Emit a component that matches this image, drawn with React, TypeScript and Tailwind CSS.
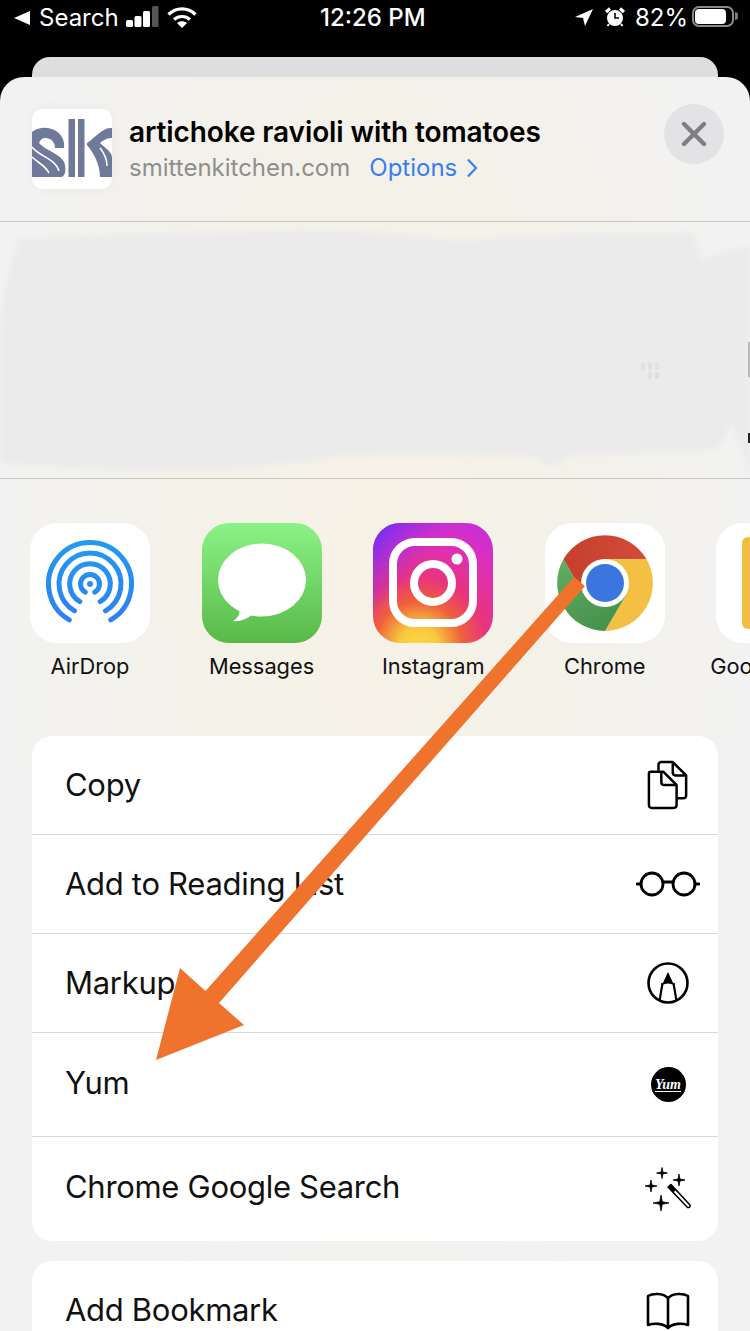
import type { ReactNode } from 'react';

const font = "font-['Inter','Noto_Sans',sans-serif]";

function StatusBar() {
  return (
    <div className="h-[57px] flex items-start pt-[5px] text-white text-[24px] leading-[26px] relative">
      <svg width="16" height="14" viewBox="0 0 16 14" className="ml-[14px] mt-[6px]" fill="#fff">
        <path d="M16 0V14L0 7Z" />
      </svg>
      <span className="ml-[9px] w-[87px]">Search</span>
      <svg width="33" height="21" viewBox="0 0 33 21" className="mt-[1px]" fill="#fff">
        <rect x="0" y="14" width="7" height="7" rx="1.5" />
        <rect x="8.5" y="10" width="7" height="11" rx="1.5" />
        <rect x="17" y="5" width="7" height="16" rx="1.5" />
        <rect x="26" y="0" width="6.5" height="21" rx="1.5" fill="#555" />
      </svg>
      <svg width="30" height="21" viewBox="0 0 30 21" className="ml-[8px] mt-[2px]" fill="none" stroke="#fff" strokeWidth="3.2">
        <path d="M1.5 7.5C9 0 21 0 28.5 7.5" />
        <path d="M7 12.5C11.5 8.5 18.5 8.5 23 12.5" />
        <path d="M15 21L10 16C13 13.8 17 13.8 20 16Z" fill="#fff" stroke="none" />
      </svg>
      <span className="ml-[123px] w-[255px] font-medium">12:26 PM</span>
      <svg width="18" height="17" viewBox="0 0 18 17" className="mt-[4px]" fill="#fff">
        <path d="M18 0L10 17L8 9L0 8Z" />
      </svg>
      <svg width="20" height="20" viewBox="0 0 20 20" className="ml-[12px] mt-[2px]">
        <circle cx="10" cy="11" r="8" fill="#fff" />
        <path d="M10 6V11H14" fill="none" stroke="#000" strokeWidth="1.6" />
        <path d="M1 5L5 1.5M19 5L15 1.5" stroke="#fff" strokeWidth="3" />
        <path d="M4 17L2.5 19M16 17L17.5 19" stroke="#fff" strokeWidth="2" />
      </svg>
      <span className="ml-[10px] w-[57px]">82%</span>
      <div className="w-[42px] h-[21px] mt-[1px] border-2 border-[#8a8a8a] rounded-[7px] p-[1px] flex">
        <div className="w-[31px] bg-white rounded-[4px]" />
      </div>
      <div className="w-[3px] h-[8px] mt-[7px] ml-[1px] bg-[#777] rounded-r-sm" />
    </div>
  );
}

function Logo() {
  return (
    <div className="w-[80px] h-[80px] bg-white rounded-[10px] overflow-hidden shrink-0 shadow-[0_0_14px_rgba(0,0,0,0.04)]">
      <svg width="80" height="80" viewBox="0 0 80 80">
        <g fill="#6f7a9a">
          <rect x="36.5" y="10" width="6.5" height="58" />
          <rect x="46" y="10" width="6.5" height="58" />
          <path d="M0 23C8 17 18 18 24 22C30 26 33 32 32 39H23C23 33 19 29 13 29C10 29 8 31 7 34C14 42 32 46 33 56C34 62 33 66 30 68H0Z" />
          <path d="M55 34C60 31 66 24 72 21C75 19 78 19 80 19V29C75 29 71 31 68 34C75 40 80 44 80 48V68H68C68 56 62 44 55 36Z" />
        </g>
        <g fill="none" stroke="#fff" strokeWidth="1.6">
          <path d="M0 38C8 48 24 50 27 62" />
          <path d="M0 48C6 54 13 56 17 64" />
          <path d="M68 39C72 44 75 50 75 57" />
        </g>
      </svg>
    </div>
  );
}

function Header() {
  return (
    <div className="h-[145px] pl-[32px] pr-[26px] pt-[32px] flex items-start border-b border-[#c6c6c2]">
      <Logo />
      <div className="ml-[17px] flex-1">
        <div className="text-[28px] leading-[32px] font-semibold text-black mt-[7px] tracking-[-0.1px]">artichoke ravioli with tomatoes</div>
        <div className="flex items-center text-[24px] leading-[30px] mt-[5px]">
          <span className="text-[#8e8e8e]">smittenkitchen.com</span>
          <span className="ml-[19px] text-[#3a7df2]">Options</span>
          <svg width="12" height="20" viewBox="0 0 12 20" className="ml-[9px]" fill="none" stroke="#3a7df2" strokeWidth="2.2">
            <path d="M2 1.5L10 10L2 18.5" />
          </svg>
        </div>
      </div>
      <div className="w-[60px] h-[60px] mt-[-5px] rounded-full bg-[#e3e3e5] flex items-center justify-center">
        <svg width="26" height="26" viewBox="0 0 26 26" stroke="#7f7f82" strokeWidth="4.4" strokeLinecap="round">
          <path d="M3 3L23 23M23 3L3 23" />
        </svg>
      </div>
    </div>
  );
}

// the blurred-out contact row
function PeopleRow() {
  return (
    <div className="h-[257px] relative border-b border-[#c6c6c2] overflow-hidden">
      <svg width="750" height="256" viewBox="0 0 750 256" className="block">
        <path
          d="M19 16C60 15 90 14 120 13C200 11 270 8 335 8C380 9 420 16 455 18C500 16 540 14 574 13C620 12 660 11 694 11L701 38C715 32 735 28 750 25V256L744 236L732 201L718 228C670 230 620 231 574 233L550 245L536 235C470 233 400 232 335 235C290 242 240 248 191 248C130 248 60 246 0 241V108L5 65Z"
          fill="#ebebeb"
          className="blur-[2px]"
        />
        <g fill="#d5e0e2" opacity="0.7">
          <rect x="641" y="141" width="4" height="7" />
          <rect x="648" y="141" width="4" height="7" />
          <rect x="655" y="141" width="4" height="7" />
          <rect x="648" y="150" width="4" height="7" />
          <rect x="655" y="150" width="4" height="7" fill="#e4d3d6" />
        </g>
        <rect x="748" y="120" width="2" height="35" fill="#b9b9b9" />
        <rect x="748" y="211" width="2" height="10" fill="#222" />
      </svg>
    </div>
  );
}

function AirDropIcon() {
  const rings = [
    'M39.25 96.9A41.5 41.5 0 1 1 80.75 96.9',
    'M44.5 87.8A31 31 0 1 1 75.5 87.8',
    'M49.85 78.6A20.3 20.3 0 1 1 70.15 78.6',
    'M55.25 69.2A9.5 9.5 0 1 1 64.75 69.2',
  ];
  return (
    <svg width="120" height="120" viewBox="0 0 120 120">
      <defs>
        <linearGradient id="airdrop" gradientUnits="userSpaceOnUse" x1="0" y1="17" x2="0" y2="97">
          <stop offset="0" stopColor="#1f9cf0" />
          <stop offset="1" stopColor="#2f80f0" />
        </linearGradient>
      </defs>
      <rect width="120" height="120" rx="27" fill="#fff" />
      <g fill="none" stroke="url(#airdrop)" strokeWidth="5" strokeLinecap="round">
        {rings.map(d => (
          <path key={d} d={d} />
        ))}
      </g>
      <circle cx="60" cy="61" r="3" fill="#2a90f2" />
    </svg>
  );
}

function MessagesIcon() {
  return (
    <svg width="120" height="120" viewBox="0 0 120 120">
      <defs>
        <linearGradient id="msg" x1="0" y1="0" x2="0" y2="1">
          <stop offset="0" stopColor="#8cf287" />
          <stop offset="1" stopColor="#58b947" />
        </linearGradient>
      </defs>
      <rect width="120" height="120" rx="27" fill="url(#msg)" />
      <ellipse cx="60" cy="57" rx="44" ry="36.5" fill="#fff" />
      <path d="M36 84C39 90 37 94 31 98C38 99 44 96 50 92Z" fill="#fff" />
    </svg>
  );
}

function InstagramIcon() {
  return (
    <svg width="120" height="120" viewBox="0 0 120 120">
      <defs>
        <radialGradient id="ig1" cx="0.38" cy="1.02" r="1.15">
          <stop offset="0" stopColor="#fbd944" />
          <stop offset="0.14" stopColor="#f8c83f" />
          <stop offset="0.32" stopColor="#ef5f3c" />
          <stop offset="0.5" stopColor="#e8337f" />
          <stop offset="0.78" stopColor="#dc2fc0" />
          <stop offset="1" stopColor="#c42fd8" />
        </radialGradient>
        <linearGradient id="ig2" x1="0" y1="0" x2="0.4" y2="0.35">
          <stop offset="0" stopColor="#5a2dfb" />
          <stop offset="1" stopColor="#a32ee8" stopOpacity="0" />
        </linearGradient>
      </defs>
      <rect width="120" height="120" rx="27" fill="url(#ig1)" />
      <rect width="120" height="120" rx="27" fill="url(#ig2)" />
      <rect x="20" y="19" width="80" height="81" rx="22" fill="none" stroke="#fff" strokeWidth="8" />
      <circle cx="60" cy="60" r="19" fill="none" stroke="#fff" strokeWidth="8" />
      <circle cx="84" cy="36" r="5.5" fill="#fff" />
    </svg>
  );
}

function ChromeIcon() {
  return (
    <svg width="120" height="120" viewBox="0 0 120 120">
      <defs>
        <linearGradient id="chromeRed" x1="0" y1="0" x2="1" y2="0">
          <stop offset="0" stopColor="#c63f2c" />
          <stop offset="1" stopColor="#d34c3b" />
        </linearGradient>
        <linearGradient id="chromeGreen" x1="0" y1="0" x2="0.7" y2="1">
          <stop offset="0" stopColor="#62ad64" />
          <stop offset="1" stopColor="#44914c" />
        </linearGradient>
      </defs>
      <rect width="120" height="120" rx="27" fill="#fff" />
      <path d="M101.6 36.3A48 48 0 0 0 18.4 36.3L39.2 72L60 36Z" fill="url(#chromeRed)" />
      <path d="M101.6 36.3A48 48 0 0 1 60 108L81 72L60 36Z" fill="#f3c044" />
      <path d="M18.4 36.3A48 48 0 0 0 60 108L81 72H39.2Z" fill="url(#chromeGreen)" />
      <circle cx="60" cy="60" r="24" fill="#fff" />
      <circle cx="60" cy="60" r="19" fill="#3a75e0" />
    </svg>
  );
}

function KeepIcon() {
  return (
    <svg width="120" height="120" viewBox="0 0 120 120">
      <rect width="120" height="120" rx="27" fill="#fff" />
      <rect x="26" y="14" width="68" height="92" rx="6" fill="#f3bd42" />
    </svg>
  );
}

const apps: { name: string; icon: ReactNode }[] = [
  { name: 'AirDrop', icon: <AirDropIcon /> },
  { name: 'Messages', icon: <MessagesIcon /> },
  { name: 'Instagram', icon: <InstagramIcon /> },
  { name: 'Chrome', icon: <ChromeIcon /> },
  { name: 'Google Keep', icon: <KeepIcon /> },
];

function AppsRow() {
  return (
    <div className="flex gap-[51.6px] pl-[30px] pt-[44px] h-[257px] overflow-hidden">
      {apps.map(a => (
        <div key={a.name} className="w-[120px] shrink-0 flex flex-col items-center">
          <div className="w-[120px] h-[120px] shrink-0">{a.icon}</div>
          <span className="mt-[10px] text-[21.8px] leading-[26px] text-[#111] whitespace-nowrap">{a.name}</span>
        </div>
      ))}
    </div>
  );
}

function CopyIcon() {
  return (
    <svg width="42" height="50" viewBox="0 0 44 52" fill="none" stroke="#000" strokeWidth="2.6" strokeLinejoin="round">
      <path d="M12 11V5Q12 2 15 2H27L41 16V37Q41 40 38 40H31" />
      <path d="M27 2V13Q27 16 30 16H41" />
      <path d="M4 12H17L31 26V47Q31 50 28 50H5Q2 50 2 47V14Q2 12 4 12Z" fill="#fff" />
      <path d="M15 12V23Q15 26 18 26H31" />
    </svg>
  );
}

function GlassesIcon() {
  return (
    <svg width="64" height="26" viewBox="0 0 64 26" fill="none" stroke="#000" strokeWidth="2.8" strokeLinecap="round">
      <circle cx="16" cy="13" r="11" />
      <circle cx="48" cy="13" r="11" />
      <path d="M27 11H37M1 13H5M59 13H63" />
    </svg>
  );
}

function MarkupIcon() {
  return (
    <svg width="42" height="42" viewBox="0 0 42 42" fill="none" stroke="#000" strokeWidth="2.6">
      <circle cx="21" cy="21" r="19.5" />
      <path d="M15.5 21L12.7 38M26.5 21L29.3 38" strokeWidth="2.2" />
      <path d="M21 10L27 23Q21 20 15 23Z" fill="#000" stroke="none" />
    </svg>
  );
}

function YumIcon() {
  return (
    <div className="w-[35px] h-[35px] rounded-full bg-black flex items-center justify-center">
      <span className="font-['Liberation_Serif',serif] italic font-bold text-[14px] leading-[13px] text-white border-b border-white">
        Yum
      </span>
    </div>
  );
}

function WandIcon() {
  const star = (x: number, y: number, r: number) => {
    const k = r * 0.16;
    return `M${x} ${y - r}L${x + k} ${y - k}L${x + r} ${y}L${x + k} ${y + k}L${x} ${y + r}L${x - k} ${y + k}L${x - r} ${y}L${x - k} ${y - k}Z`;
  };
  return (
    <svg width="48" height="44" viewBox="0 0 48 44">
      <g fill="#000" stroke="#000" strokeWidth="0.8" strokeLinejoin="round">
        <path d={star(18, 6, 5.5)} />
        <path d={star(35, 13, 6)} />
        <path d={star(7, 19, 6)} />
        <path d={star(17, 36, 8)} />
      </g>
      <path d="M24 20L27 17.5L46 38Q46.5 41 43.5 40.5Z" fill="#fff" stroke="#000" strokeWidth="1.6" strokeLinejoin="round" />
      <path d="M24 20L27 17.5L32 23L29 25.5Z" fill="#000" />
    </svg>
  );
}

function BookIcon() {
  return (
    <svg width="46" height="38" viewBox="0 0 46 38" fill="none" stroke="#000" strokeWidth="2.6" strokeLinejoin="round">
      <path d="M23 6C18 1 8 1 3 4V33C9 31 18 31 23 36C28 31 37 31 43 33V4C38 1 28 1 23 6Z" />
      <path d="M23 6V36" />
    </svg>
  );
}

function Row({ label, icon, h, last, lift }: { label: string; icon: ReactNode; h: string; last?: boolean; lift?: string }) {
  return (
    <div className={`${h} flex items-center pl-[33px] ${last ? '' : 'border-b border-[#d9d9db]'}`}>
      <span className={`flex-1 text-[31px] tracking-[-0.3px] text-[#111] ${lift ?? ''}`}>{label}</span>
      <div className="w-[72px] mr-[14px] flex justify-center">{icon}</div>
    </div>
  );
}

function ActionLists() {
  return (
    <div className="px-[32px] pb-[20px]">
      <div className="bg-white rounded-[20px] overflow-hidden">
        <Row h="h-[99px]" label="Copy" icon={<CopyIcon />} />
        <Row h="h-[99px]" label="Add to Reading List" icon={<GlassesIcon />} />
        <Row h="h-[99px]" label="Markup" icon={<MarkupIcon />} />
        <Row h="h-[104px]" label="Yum" icon={<YumIcon />} lift="pb-[2px]" />
        <Row h="h-[104px]" label="Chrome Google Search" icon={<WandIcon />} last lift="pb-[4px]" />
      </div>
      <div className="bg-white rounded-[20px] overflow-hidden mt-[20px]">
        <Row h="h-[99px]" label="Add Bookmark" icon={<BookIcon />} last />
      </div>
    </div>
  );
}

export default function App() {
  return (
    <div className={`relative w-[750px] h-[1331px] overflow-hidden bg-black ${font}`}>
      <StatusBar />
      <div className="mx-[32px] h-[20px] bg-[#dedede] rounded-t-[18px]" />
      <div className="rounded-t-[24px] bg-[radial-gradient(ellipse_at_50%_36%,#f6f2e6_0%,#f4f1e9_38%,#f2f2f2_72%)]">
        <Header />
        <PeopleRow />
        <AppsRow />
        <ActionLists />
      </div>
      {/* annotation arrow drawn over the sheet */}
      <svg width="750" height="1331" viewBox="0 0 750 1331" className="absolute inset-0 pointer-events-none">
        <path
          d="M574 577L585 586L219 1003L244 1025L156 1060L180 968L205.5 991Z"
          fill="#f0732d"
        />
      </svg>
    </div>
  );
}
